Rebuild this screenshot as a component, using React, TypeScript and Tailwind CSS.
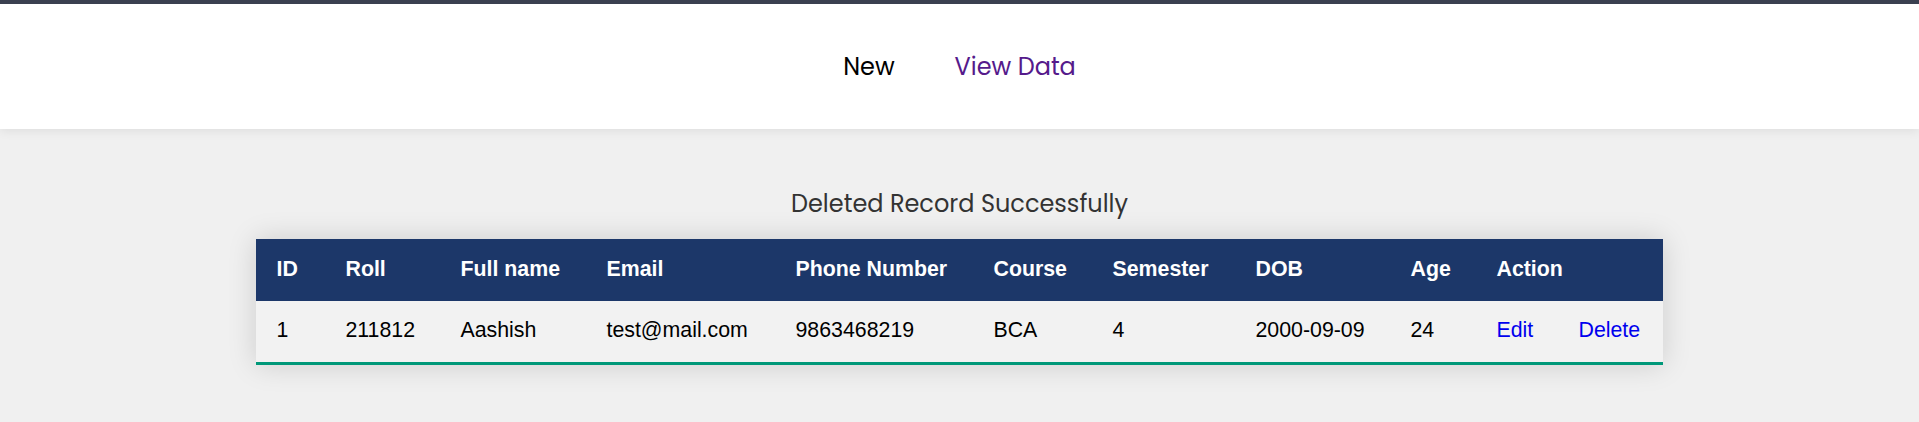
const columns = [
  { label: "ID", width: "w-[69px]" },
  { label: "Roll", width: "w-[115px]" },
  { label: "Full name", width: "w-[146px]" },
  { label: "Email", width: "w-[189px]" },
  { label: "Phone Number", width: "w-[198px]" },
  { label: "Course", width: "w-[119px]" },
  { label: "Semester", width: "w-[143px]" },
  { label: "DOB", width: "w-[155px]" },
  { label: "Age", width: "w-[86px]" },
];

const students = [
  {
    id: 1,
    roll: "211812",
    name: "Aashish",
    email: "test@mail.com",
    phone: "9863468219",
    course: "BCA",
    semester: 4,
    dob: "2000-09-09",
    age: 24,
  },
];

export default function App() {
  return (
    <div className="min-h-screen bg-[#f0f0f0]">
      {/* Navbar */}
      <header className="relative z-10 h-[129px] border-t-4 border-[#3a4050] bg-white shadow-[0_2px_10px_rgba(0,0,0,0.08)] flex items-center justify-center">
        <nav className="flex items-center gap-[60px] font-['Poppins',Inter,sans-serif] text-[24px]">
          <a href="#" className="text-black">
            New
          </a>
          <a href="#" className="text-[#551a8b]">
            View Data
          </a>
        </nav>
      </header>

      <main className="pt-[57px] pb-10 flex flex-col items-center">
        <p className="h-[36px] leading-[36px] text-[24px] text-[#333] font-['Poppins',Inter,sans-serif]">
          Deleted Record Successfully
        </p>

        {/* Records table */}
        <table className="mt-[17px] w-[1406px] table-fixed border-collapse whitespace-nowrap font-['Liberation_Sans',Arial,sans-serif] text-[21.33px] shadow-[0_0_27px_rgba(0,0,0,0.15)]">
          <colgroup>
            {columns.map((col) => (
              <col key={col.label} className={col.width} />
            ))}
            <col className="w-[82px]" />
            <col className="w-[104px]" />
          </colgroup>
          <thead>
            <tr className="h-[62px] bg-[#1c3769] text-white text-left">
              {columns.map((col) => (
                <th key={col.label} className="px-[20px] font-bold">
                  {col.label}
                </th>
              ))}
              <th colSpan={2} className="px-[20px] font-bold">
                Action
              </th>
            </tr>
          </thead>
          <tbody>
            {students.map((s) => (
              <tr key={s.id} className="h-[62px] bg-[#f2f2f2] text-black border-b-[3px] border-[#009879]">
                <td className="px-[20px]">{s.id}</td>
                <td className="px-[20px]">{s.roll}</td>
                <td className="px-[20px]">{s.name}</td>
                <td className="px-[20px]">{s.email}</td>
                <td className="px-[20px]">{s.phone}</td>
                <td className="px-[20px]">{s.course}</td>
                <td className="px-[20px]">{s.semester}</td>
                <td className="px-[20px]">{s.dob}</td>
                <td className="px-[20px]">{s.age}</td>
                <td className="px-[20px]">
                  <a href="#" className="text-[#0000ee]">
                    Edit
                  </a>
                </td>
                <td className="px-[20px]">
                  <a href="#" className="text-[#0000ee]">
                    Delete
                  </a>
                </td>
              </tr>
            ))}
          </tbody>
        </table>
      </main>
    </div>
  );
}
